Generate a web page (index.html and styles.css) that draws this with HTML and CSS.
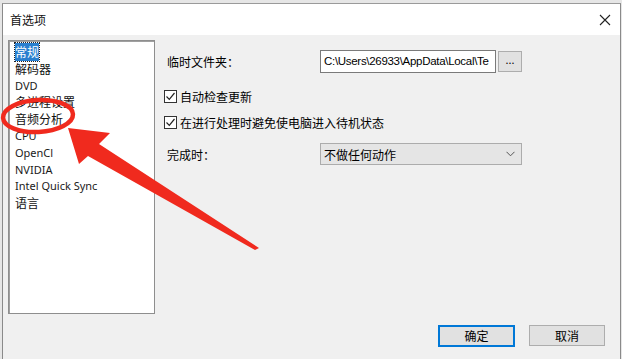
FILE: index.html
```html
<!DOCTYPE html>
<html lang="zh">
<head>
<meta charset="utf-8">
<title>首选项</title>
<link rel="stylesheet" href="styles.css">
</head>
<body>
<div class="window">
  <div class="titlebar">
    <span class="title">首选项</span>
    <svg class="close" width="12" height="12" viewBox="0 0 12 12"><path d="M1 1L11 11M11 1L1 11" stroke="#222" stroke-width="1.1" fill="none"/></svg>
  </div>
  <div class="body">
    <div class="main">
      <ul class="list">
        <li><span class="sel">常规</span></li>
        <li>解码器</li>
        <li class="latin">DVD</li>
        <li>多进程设置</li>
        <li>音频分析</li>
        <li class="latin">CPU</li>
        <li class="latin">OpenCl</li>
        <li class="latin">NVIDIA</li>
        <li class="latin">Intel Quick Sync</li>
        <li>语言</li>
      </ul>
      <div class="panel">
        <div class="row folder">
          <span class="label">临时文件夹：</span>
          <div class="input">C:\Users\26933\AppData\Local\Te</div>
          <div class="browse">...</div>
        </div>
        <div class="check c1"><span class="box"><svg width="11" height="11" viewBox="0 0 11 11"><path d="M1.5 5.5L4.3 8.3L9.5 2" stroke="#222" stroke-width="1.2" fill="none"/></svg></span>自动检查更新</div>
        <div class="check c2"><span class="box"><svg width="11" height="11" viewBox="0 0 11 11"><path d="M1.5 5.5L4.3 8.3L9.5 2" stroke="#222" stroke-width="1.2" fill="none"/></svg></span>在进行处理时避免使电脑进入待机状态</div>
        <div class="row done">
          <span class="label">完成时：</span>
          <div class="select"><span>不做任何动作</span><svg width="9" height="6" viewBox="0 0 9 6"><path d="M0.5 0.8L4.5 4.8L8.5 0.8" stroke="#555" stroke-width="1" fill="none"/></svg></div>
        </div>
      </div>
    </div>
    <div class="buttons">
      <div class="btn primary">确定</div>
      <div class="btn">取消</div>
    </div>
  </div>
</div>
<svg class="annot" width="622" height="359" viewBox="0 0 622 359">
  <ellipse cx="38" cy="116" rx="35" ry="16" fill="none" stroke="#f02a1e" stroke-width="4.5" transform="rotate(-3 38 116)"/>
  <polygon points="68,128 110,133 99,144 259,248 255,250 88,156 79,164" fill="#f02a1e"/>
</svg>
</body>
</html>
```

FILE: styles.css
```css
html, body {
  margin: 0;
  padding: 0;
}
body {
  width: 622px;
  height: 359px;
  background: #e6e6e6;
  font-family: "Noto Sans", "Noto Sans CJK SC", sans-serif;
  font-size: 12px;
  color: #000;
  position: relative;
  overflow: hidden;
}
.window {
  margin: 3px 1px 0 2px;
  height: 356px;
  border-left: 1px solid #8a8a8a;
  border-right: 1px solid #8a8a8a;
  border-top: 1px solid #9a9a9a;
  background: #f0f0f0;
  display: flex;
  flex-direction: column;
}
.titlebar {
  height: 31px;
  background: #fff;
  display: flex;
  align-items: center;
  justify-content: space-between;
  padding: 0 9px 0 7px;
  flex: none;
}
.title {
  font-family: "Noto Sans CJK SC", sans-serif;
  font-size: 12px;
  color: #111;
}
.close {
  display: block;
}
.body {
  padding: 5px 15px 0 5px;
  display: flex;
  flex-direction: column;
}
.main {
  display: flex;
  gap: 9px;
}
.list {
  list-style: none;
  margin: 0;
  padding: 3px 0 0 6px;
  width: 139px;
  height: 269px;
  background: #fff;
  border: 1px solid #8e8e8e;
  box-shadow: inset 1px 1px 0 #a0a0a0;
}
.list li {
  height: 16.8px;
  line-height: 16.8px;
  white-space: nowrap;
  font-family: "Noto Sans CJK SC", sans-serif;
  color: #111;
}
.list li.latin {
  font-family: "Noto Sans", sans-serif;
  font-size: 11px;
  color: #1a1a1a;
}
.sel {
  background: #2a7fcf;
  color: #fff;
  outline: 1px dotted #222;
  padding: 0 0 1px 0;
}
.panel {
  flex: 1;
  display: flex;
  flex-direction: column;
}
.row {
  display: flex;
  align-items: center;
}
.label {
  width: 153px;
  padding-left: 3px;
  font-family: "Noto Sans CJK SC", sans-serif;
}
.folder {
  margin-top: 10px;
}
.input {
  width: 171px;
  height: 21px;
  line-height: 21px;
  padding-left: 3px;
  background: #fff;
  border: 1px solid #7a7a7a;
  overflow: hidden;
  white-space: nowrap;
  font-family: "Liberation Sans", sans-serif;
  font-size: 11.5px;
  letter-spacing: -0.3px;
}
.browse {
  margin-left: 2px;
  width: 22px;
  height: 19px;
  line-height: 15px;
  text-align: center;
  background: #e1e1e1;
  border: 1px solid #adadad;
  font-size: 11px;
}
.check {
  display: flex;
  align-items: center;
  font-family: "Noto Sans CJK SC", sans-serif;
  height: 14px;
}
.c1 { margin-top: 16px; }
.c2 { margin-top: 12px; }
.box {
  width: 11px;
  height: 11px;
  border: 1px solid #333;
  background: #fff;
  margin-right: 3px;
  display: flex;
}
.done {
  margin-top: 14px;
}
.select {
  width: 202px;
  height: 22px;
  background: #e5e5e5;
  border: 1px solid #acacac;
  display: flex;
  align-items: center;
  justify-content: space-between;
  padding: 0 6px 0 3px;
  box-sizing: border-box;
  font-family: "Noto Sans CJK SC", sans-serif;
}
.buttons {
  display: flex;
  justify-content: flex-end;
  gap: 14px;
  margin-top: 11px;
}
.btn {
  width: 74px;
  height: 19px;
  line-height: 19px;
  text-align: center;
  background: #e1e1e1;
  border: 1px solid #adadad;
  font-family: "Noto Sans CJK SC", sans-serif;
}
.btn.primary {
  border: 2px solid #0078d7;
  width: 73px;
  height: 18px;
  line-height: 18px;
}
.annot {
  position: absolute;
  left: 0;
  top: 0;
  pointer-events: none;
}
```
